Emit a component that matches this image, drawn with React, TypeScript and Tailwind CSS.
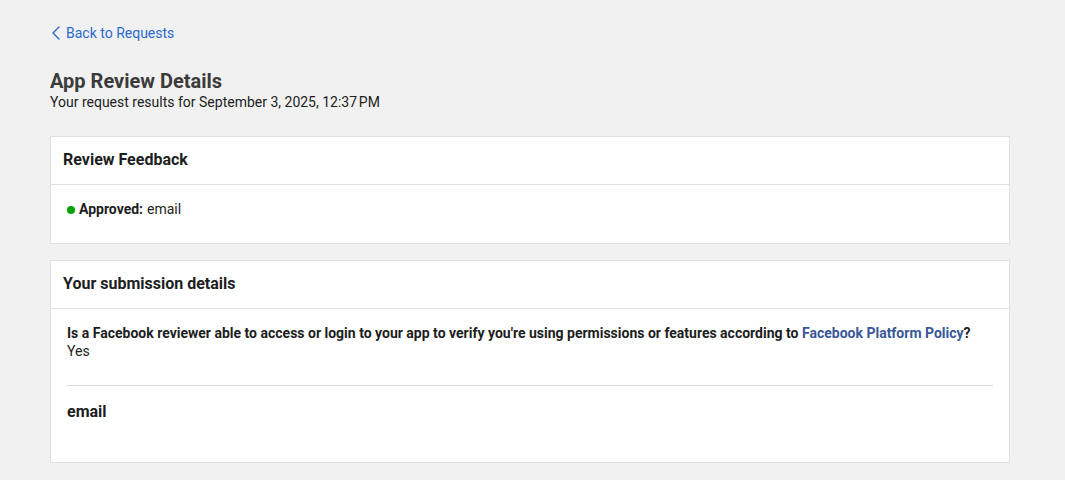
import React from "react";

export default function App() {
  return (
    <div
      className="min-h-[480px] bg-[#f1f1f1] px-[50px] pt-[24px] pb-[18px] text-[#1c1e21]"
      style={{ fontFamily: "Roboto, 'Liberation Sans', sans-serif" }}
    >
      <a href="#" className="flex items-center gap-[5px] text-[14px] leading-[18px] text-[#2a6ad3] h-[18px]">
        <svg width="10" height="14" viewBox="0 0 10 14" className="ml-[1px]" fill="none">
          <path d="M8 1L2 7l6 6" stroke="#2a6ad3" strokeWidth="1.4" strokeLinecap="round" strokeLinejoin="round" />
        </svg>
        <span>Back to Requests</span>
      </a>

      <h1 className="mt-[27px] text-[20px] leading-[24px] font-bold text-[#3b3b3b]">App Review Details</h1>
      <p className="text-[14px] leading-[18px] text-[#1c1e21]">Your request results for September 3, 2025, 12:37&#8239;PM</p>

      <div className="w-[960px]">
        <section className="mt-[25px] bg-white border border-[#dddfe2]">
          <div className="h-[48px] px-3 pb-[2px] flex items-center border-b border-[#dddfe2]">
            <h2 className="text-[16px] font-bold leading-[20px]">Review Feedback</h2>
          </div>
          <div className="px-4 pt-[15px] pb-[25px]">
            <div className="flex items-center text-[14px] leading-[18px]">
              <span className="inline-block w-[8px] h-[8px] rounded-full bg-[#02a202] mr-[4px] mt-[1px]" />
              <span className="font-bold mr-[4px]">Approved:</span>
              <span>email</span>
            </div>
          </div>
        </section>

        <section className="mt-[16px] bg-white border border-[#dddfe2]">
          <div className="h-[48px] px-3 pb-[2px] flex items-center border-b border-[#dddfe2]">
            <h2 className="text-[16px] font-bold leading-[20px]">Your submission details</h2>
          </div>
          <div className="px-4 pt-[15px] pb-[40px]">
            <p className="text-[14px] leading-[18px] font-bold">
              Is a Facebook reviewer able to access or login to your app to verify you're using permissions or features according to{" "}
              <a href="#" className="text-[#385898]">Facebook Platform Policy</a>?
            </p>
            <p className="text-[14px] leading-[18px]">Yes</p>
            <div className="mt-[25px] border-t border-[#dadde1]" />
            <h3 className="mt-[16px] text-[16px] leading-[20px] font-bold">email</h3>
          </div>
        </section>
      </div>
    </div>
  );
}
